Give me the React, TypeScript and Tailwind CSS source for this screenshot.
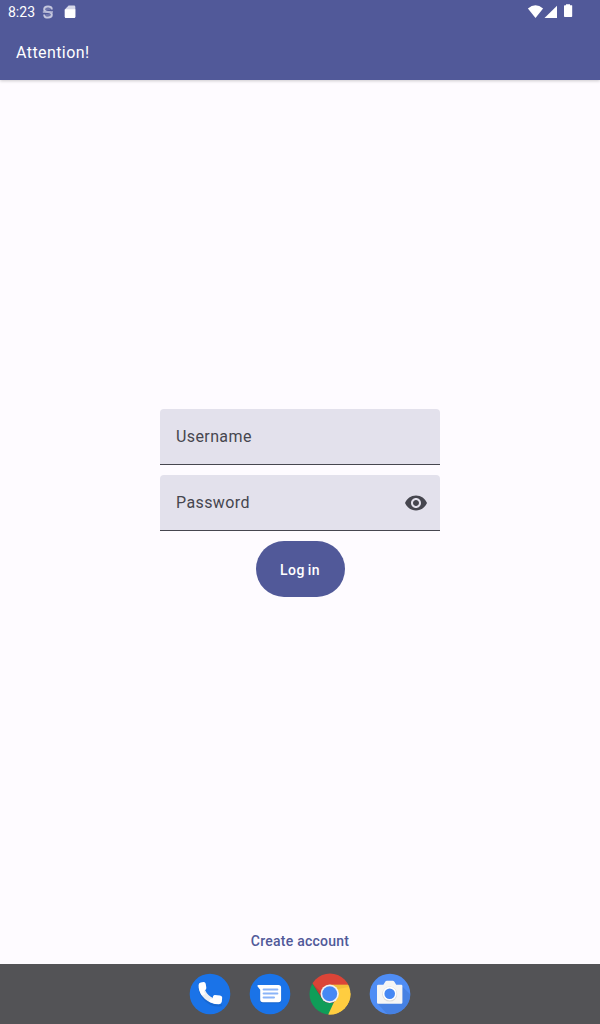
import React from "react";

function StatusBar() {
  return (
    <div className="flex h-6 items-center justify-between pr-[26px] pl-2">
      <div className="flex items-center">
        <span className="w-[27px] text-[14px] leading-6 whitespace-nowrap">8:23</span>
        <svg className="ml-[7px]" width="12" height="16" viewBox="0 0 12 16" fill="none">
          <path
            d="M9.8 5.6C9.8 3.2 8.4 2.4 6 2.4S2.2 3.2 2.2 5.2S3.6 8 6 8S9.8 8.6 9.8 10.8S8.4 13.6 6 13.6S2.2 12.8 2.2 10.4"
            stroke="#c5c7de"
            strokeWidth="2"
          />
          <path d="M.8 8H11" stroke="#b4b7d5" strokeWidth="1.5" />
          <path d="M4 5H8M4 11H8" stroke="#8f94bf" strokeWidth="1" />
        </svg>
        <svg className="ml-[10px]" width="12" height="14" viewBox="0 0 12 14">
          <path d="M4.6 .6H10Q11.3 .6 11.3 1.9V11.8Q11.3 13 10 13H2Q.8 13 .8 11.8V4.4Z" fill="#d5d7e8" />
          <path d="M3.6 4.2H11.3V11.8Q11.3 13 10 13H2Q.8 13 .8 11.8V5.4Q.8 4.2 2 4.2Z" fill="#fff" />
        </svg>
      </div>
      <svg width="48" height="16" viewBox="0 0 48 16" fill="#fff">
        <path d="M1.9 4.4Q9.5-1.7 17.1 4.4L9.5 14Z" />
        <path d="M31 1.8V14H18.5Z" />
        <path d="M40 .2H44V1.2H46Q46.2 1.2 46.2 2V12.2Q46.2 13 45.4 13H38.8Q38 13 38 12.2V2Q38 1.2 38.8 1.2H40Z" />
      </svg>
    </div>
  );
}

function Field({ label, children }: { label: string; children?: React.ReactNode }) {
  return (
    <div className="flex h-14 w-[280px] items-center justify-between rounded-t-[4px] border-b border-[#46464f] bg-[#e3e1ec] pr-3 pl-4 text-[16px] tracking-[0.4px] text-[#46464f]">
      <span>{label}</span>
      {children}
    </div>
  );
}

function PhoneIcon() {
  return (
    <svg width="42" height="42" viewBox="0 0 42 42">
      <circle cx="21" cy="21" r="20.3" fill="#1a73e8" />
      <path d="M10.3 15Q12 26 22 31Q28 33.5 32.8 32" fill="none" stroke="#155fc2" strokeWidth="2" opacity=".6" />
      <path d="M10 15C10.6 23 19 31 29 31.1L24.5 25.2Q18.5 22.6 16.2 17.2Z" fill="#eceef1" />
      <path
        d="M11.8 9.4L14.6 9.1Q16.3 9 16.7 10.8L17.3 14.4Q17.5 16 16.3 16.9L14.9 18.2Q15.3 19.6 16.4 21L13 22.6Q9.3 17 9.6 12Q9.8 9.7 11.8 9.4Z"
        fill="#fff"
      />
      <path
        d="M25.8 22.1L31 22.4Q33.2 22.6 33.2 24.6L32.8 28.8Q32.4 31 30 31.2Q24.8 31.2 20 28.5L21.8 25.5L23.5 26.2L24 23.6Q24.4 22 25.8 22.1Z"
        fill="#fff"
      />
    </svg>
  );
}

function MessagesIcon() {
  return (
    <svg width="42" height="42" viewBox="0 0 42 42">
      <circle cx="21" cy="21" r="20.3" fill="#1a73e8" />
      <rect x="11.2" y="14" width="21" height="16.2" rx="3" fill="#155fc2" opacity=".7" />
      <path d="M9.3 12H29.4Q32.1 12 32.1 14.7V26.5Q32.1 29.2 29.4 29.2H13.9Q11.2 29.2 11.2 26.5V16.8L8.6 13.6Q7.8 12 9.3 12Z" fill="#fff" />
      <path d="M14.6 16.5H28.4M14.6 20.5H28.4M14.6 24.5H25" stroke="#8ab4f8" strokeWidth="2" strokeLinecap="round" />
    </svg>
  );
}

function ChromeIcon() {
  return (
    <svg width="42" height="42" viewBox="0 0 42 42">
      <defs>
        <clipPath id="chrome-disc">
          <circle cx="21" cy="21" r="20.5" />
        </clipPath>
      </defs>
      <g clipPath="url(#chrome-disc)">
        <path d="M0 0H42V12H21L13 25L3 10Z" fill="#db4437" />
        <path d="M21 11.8H42V42H19.5L28.6 25Z" fill="#ffcd40" />
        <path d="M0 5L3.4 10.5L12.8 25.5Q16 30.5 21 30H28L19.3 42H0Z" fill="#0f9d58" />
        <path d="M28.6 25L42 20V42H19L25 29Z" fill="#ffcd40" />
        <path d="M21 11.8H39.2L40 14L29 16Z" fill="#dba72f" opacity=".35" />
        <path d="M3.4 10.5L12.8 25.5L12 19Z" fill="#9c3329" opacity=".35" />
      </g>
      <circle cx="20.7" cy="20.8" r="9.2" fill="#f1f1f1" />
      <circle cx="20.7" cy="20.8" r="7.5" fill="#4688f4" />
    </svg>
  );
}

function CameraIcon() {
  return (
    <svg width="42" height="42" viewBox="0 0 42 42">
      <defs>
        <clipPath id="camera-disc">
          <circle cx="21" cy="21" r="20.3" />
        </clipPath>
      </defs>
      <circle cx="21" cy="21" r="20.3" fill="#4f8df5" />
      <path d="M33.2 13.5L43 23V42H19L8.5 30.5Z" fill="#427bd8" opacity=".65" clipPath="url(#camera-disc)" />
      <path d="M9.2 11.8H14.4L16.2 8.8Q16.8 7.8 18 7.8H23.6Q24.8 7.8 25.4 8.8L27.2 11.8H32.2Q33.4 11.8 33.4 13V29.5Q33.4 30.8 32.2 30.8H9.2Q8 30.8 8 29.5V13Q8 11.8 9.2 11.8Z" fill="#f5f5f5" />
      <circle cx="20.7" cy="21.1" r="7.5" fill="#dcdcdc" />
      <circle cx="20.7" cy="20.7" r="6.9" fill="#fff" />
      <circle cx="20.7" cy="20.7" r="5.3" fill="#4688f4" />
    </svg>
  );
}

export default function App() {
  return (
    <div className="flex h-[1024px] w-[600px] flex-col bg-[#fefbff] font-['Roboto',sans-serif]">
      <header className="h-20 shrink-0 bg-[#515999] text-white shadow-[0_1px_3px_rgba(0,0,0,0.2)]">
        <StatusBar />
        <h1 className="flex h-14 items-center pt-0.5 pl-4 text-[16px] font-normal tracking-[0.42px]">Attention!</h1>
      </header>

      <main className="flex grow flex-col items-center pt-[329px]">
        <div className="flex flex-col items-center gap-[10px]">
          <Field label="Username" />
          <Field label="Password">
            <svg width="24" height="24" viewBox="0 0 24 24" fill="#46464f">
              <path d="M12 4.5C7 4.5 2.73 7.61 1 12c1.73 4.39 6 7.5 11 7.5s9.27-3.11 11-7.5c-1.73-4.39-6-7.5-11-7.5zM12 17c-2.76 0-5-2.24-5-5s2.24-5 5-5 5 2.24 5 5-2.24 5-5 5zm0-8c-1.66 0-3 1.34-3 3s1.34 3 3 3 3-1.34 3-3-1.34-3-3-3z" />
            </svg>
          </Field>
          <button className="h-14 w-[89px] rounded-full bg-[#515999] pt-0.5 text-[14px] font-medium tracking-[0.45px] text-white [word-spacing:-1px]">
            Log in
          </button>
        </div>
        <button className="mt-auto mb-[13px] text-[14px] leading-5 font-medium tracking-[0.25px] text-[#515999]">
          Create account
        </button>
      </main>

      <nav className="flex h-[60px] shrink-0 items-center justify-center gap-[18px] bg-[#535356]">
        <PhoneIcon />
        <MessagesIcon />
        <ChromeIcon />
        <CameraIcon />
      </nav>
    </div>
  );
}
